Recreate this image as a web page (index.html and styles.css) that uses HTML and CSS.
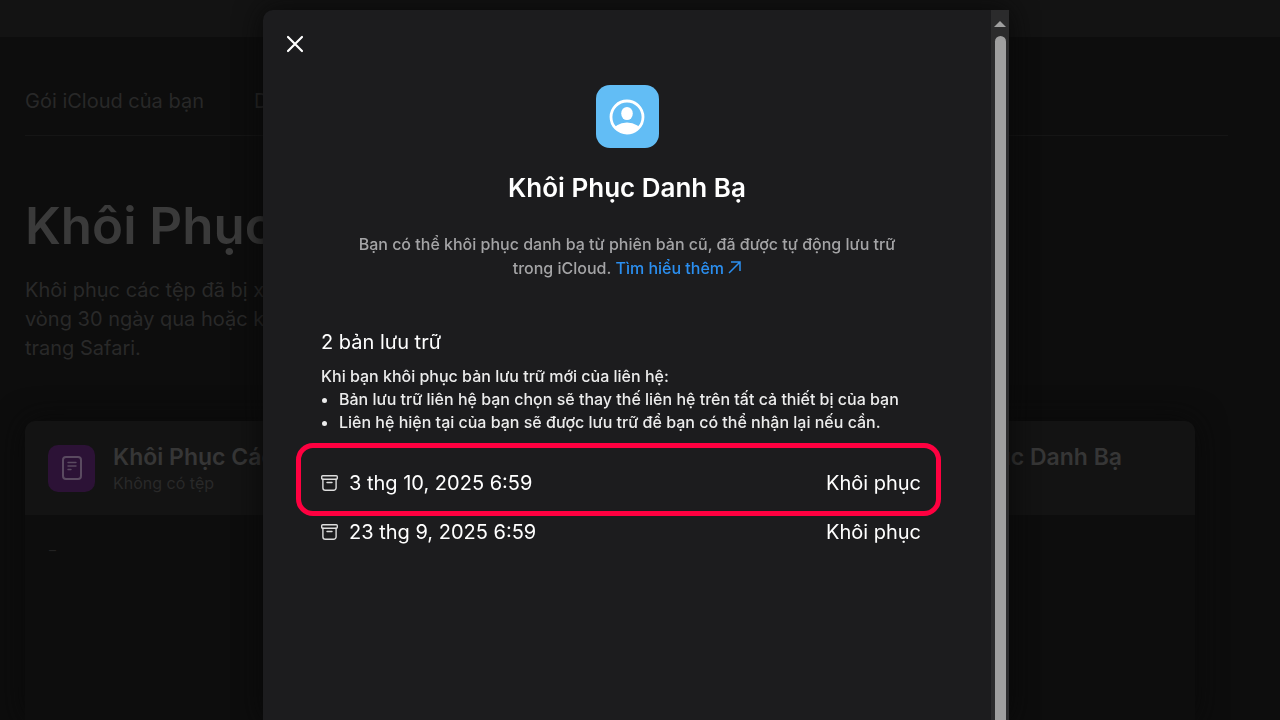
FILE: index.html
```html
<!DOCTYPE html>
<html lang="vi">
<head>
<meta charset="utf-8">
<title>Khôi Phục Danh Bạ</title>
<meta name="viewport" content="width=device-width, initial-scale=1">
<link rel="stylesheet" href="styles.css">
</head>
<body>
<div class="page" aria-hidden="true">
  <header class="topbar"></header>
  <main class="content">
    <nav class="nav">
      <a href="#plan">Gói iCloud của bạn</a>
      <a href="#data">Dữ liệu</a>
    </nav>
    <section class="intro">
      <h1>Khôi Phục</h1>
      <p>Khôi phục các tệp đã bị xóa<br>vòng 30 ngày qua hoặc khôi<br>trang Safari.</p>
    </section>
    <section class="cards">
      <article class="card">
        <header class="card-head">
          <span class="card-icon">
            <svg width="20" height="24" viewBox="0 0 20 24" fill="none" stroke="#5a4a60" stroke-width="2" stroke-linecap="round"><rect x="1" y="1" width="18" height="22" rx="3"/><path stroke-width="1.4" d="M6 6.500h8M6 10h8M6 13.500h3"/></svg>
          </span>
          <div>
            <h2>Khôi Phục Các Tệp</h2>
            <p>Không có tệp</p>
          </div>
        </header>
        <div class="card-body">–</div>
      </article>
      <article class="card"><header class="card-head"></header><div class="card-body"></div></article>
      <article class="card">
        <header class="card-head">
          <span class="card-icon"></span>
          <div>
            <h2>Khôi Phục Danh Bạ</h2>
            <p>2 bản lưu trữ</p>
          </div>
        </header>
        <div class="card-body"></div>
      </article>
    </section>
  </main>
</div>

<div class="backdrop">
  <div class="dialog" role="dialog" aria-modal="true" aria-labelledby="dialog-title">
    <div class="dialog-main">
      <button class="close" type="button" aria-label="Đóng">
        <svg width="18" height="18" viewBox="0 0 18 18" fill="none" stroke="#fff" stroke-width="2.200" stroke-linecap="round"><path d="M2 2l14 14M16 2L2 16"/></svg>
      </button>
      <div class="hero">
        <span class="app-icon">
          <svg width="36" height="36" viewBox="0 0 36 36"><defs><clipPath id="face"><circle cx="18" cy="18" r="16"/></clipPath></defs><circle cx="18" cy="18" r="16" fill="none" stroke="#fff" stroke-width="2.800"/><ellipse cx="18" cy="14.500" rx="5.800" ry="6.600" fill="#fff"/><ellipse cx="18" cy="33" rx="14" ry="9.500" fill="#fff" clip-path="url(#face)"/></svg>
        </span>
        <h2 id="dialog-title">Khôi Phục Danh Bạ</h2>
        <p>Bạn có thể khôi phục danh bạ từ phiên bản cũ, đã được tự động lưu trữ trong iCloud. <a href="#more">Tìm hiểu thêm <svg width="13" height="13" viewBox="0 0 13 13" fill="none" stroke="currentColor" stroke-width="1.500"><path d="M1 12L12 1M3 1h9v9"/></svg></a></p>
      </div>
      <section class="archives">
        <h3>2 bản lưu trữ</h3>
        <p>Khi bạn khôi phục bản lưu trữ mới của liên hệ:</p>
        <ul class="notes">
          <li>Bản lưu trữ liên hệ bạn chọn sẽ thay thế liên hệ trên tất cả thiết bị của bạn</li>
          <li>Liên hệ hiện tại của bạn sẽ được lưu trữ để bạn có thể nhận lại nếu cần.</li>
        </ul>
        <ul class="rows">
          <li class="row marked">
            <svg width="17" height="16" viewBox="0 0 17 16" fill="none" stroke="#ddd" stroke-width="1.400" stroke-linecap="round"><rect x=".7" y=".7" width="15.600" height="3.600" rx="1"/><path d="M1.900 4.300v8.500a2.500 2.500 0 0 0 2.500 2.500h8.200a2.500 2.500 0 0 0 2.500-2.500V4.300M6 7.500h5"/></svg>
            <span>3 thg 10, 2025 6:59</span>
            <button type="button">Khôi phục</button>
          </li>
          <li class="row">
            <svg width="17" height="16" viewBox="0 0 17 16" fill="none" stroke="#ddd" stroke-width="1.400" stroke-linecap="round"><rect x=".7" y=".7" width="15.600" height="3.600" rx="1"/><path d="M1.900 4.300v8.500a2.500 2.500 0 0 0 2.500 2.500h8.200a2.500 2.500 0 0 0 2.500-2.500V4.300M6 7.500h5"/></svg>
            <span>23 thg 9, 2025 6:59</span>
            <button type="button">Khôi phục</button>
          </li>
        </ul>
      </section>
    </div>
    <div class="scrollbar" aria-hidden="true">
      <svg width="12" height="6" viewBox="0 0 12 6"><path d="M0 6L6 0l6 6z" fill="#a0a0a0"/></svg>
      <div class="thumb"></div>
    </div>
  </div>
</div>
</body>
</html>
```
FILE: styles.css
```css
* { box-sizing: border-box; }
html, body { height: 100%; }
body {
  margin: 0;
  overflow: hidden;
  background: #0d0d0d;
  color: #fff;
  font-family: Inter, "Liberation Sans", sans-serif;
}
h1, h2, h3, p, ul { margin: 0; padding: 0; }
button { padding: 0; border: 0; background: none; color: inherit; font: inherit; }
a { text-decoration: none; }

.page { display: flex; flex-direction: column; height: 100%; color: #2b2b2b; }
.topbar { flex: none; height: 37px; background: #131313; }
.content { display: flex; flex: 1; flex-direction: column; padding: 0 52px 0 25px; }
.nav { display: flex; gap: 50px; padding: 50px 0 20px; border-bottom: 1px solid #151515; font-size: 20px; line-height: 28px; }
.nav a { color: #282828; }
.intro { padding: 56px 0 58px; }
.intro h1 { color: #3a3a3a; font-size: 51px; line-height: 68px; font-weight: 600; }
.intro p { padding-top: 16px; color: #292929; font-size: 20px; line-height: 29px; }
.cards { display: grid; flex: 1; grid-template-columns: repeat(3, 1fr); gap: 28px; padding-right: 33px; }
.card { display: flex; flex-direction: column; border-radius: 10px 10px 0 0; box-shadow: 0 0 30px #090909; overflow: hidden; }
.card-head { display: flex; align-items: center; gap: 18px; height: 94px; padding: 0 23px; background: #131313; }
.card-head h2 { color: #363636; font-size: 23px; line-height: 29px; font-weight: 600; white-space: nowrap; }
.card-head p { color: #292929; font-size: 16px; line-height: 22px; }
.card-icon { display: flex; flex: none; align-items: center; justify-content: center; width: 47px; height: 47px; border-radius: 10px; background: #2c1236; }
.card-body { flex: 1; padding: 24px; background: #0d0d0d; color: #222; font-size: 14px; line-height: 22px; }

.backdrop { position: fixed; inset: 0; display: flex; justify-content: center; padding: 10px 8px 0 0; }
.dialog {
  display: flex;
  width: 100%;
  max-width: 746px;
  border-radius: 10px 0 0 0;
  background: #1c1c1e;
  box-shadow: 0 0 28px #080808;
  overflow: hidden;
}
.dialog-main { flex: 1; padding: 20px 58px; }
.close { display: flex; align-items: center; justify-content: center; width: 28px; height: 28px; margin-left: -40px; }
.hero { display: flex; flex-direction: column; align-items: center; padding: 27px 24px 0; text-align: center; }
.app-icon { display: flex; align-items: center; justify-content: center; width: 63px; height: 63px; border-radius: 14px; background: #62bdf5; }
.hero h2 { padding: 22px 0 26px; font-size: 26px; line-height: 36px; font-weight: 600; }
.hero p { color: #a4a4a6; font-size: 16px; line-height: 24px; font-weight: 500; }
.hero a { color: #2b8ff0; white-space: nowrap; }
.archives { padding-top: 48px; }
.archives h3 { padding-bottom: 9px; font-size: 20px; line-height: 28px; font-weight: 400; }
.archives p, .notes { color: #ececec; font-size: 16px; line-height: 23px; font-weight: 500; }
.notes { padding-left: 18px; white-space: nowrap; }
.rows { padding-top: 24px; list-style: none; }
.row { position: relative; display: flex; align-items: center; gap: 11px; height: 49px; padding-right: 12px; font-size: 20px; }
.row button { margin-left: auto; }
.marked::after { content: ""; position: absolute; inset: -15px -8px -9px -25px; border: 5px solid #ff0040; border-radius: 17px; }
.scrollbar { display: flex; flex: none; flex-direction: column; align-items: center; gap: 9px; width: 18px; padding-top: 11px; background: #2b2b2c; }
.scrollbar svg { flex: none; }
.thumb { flex: 1; width: 11px; border-radius: 6px 6px 0 0; background: #9f9f9f; }
```
